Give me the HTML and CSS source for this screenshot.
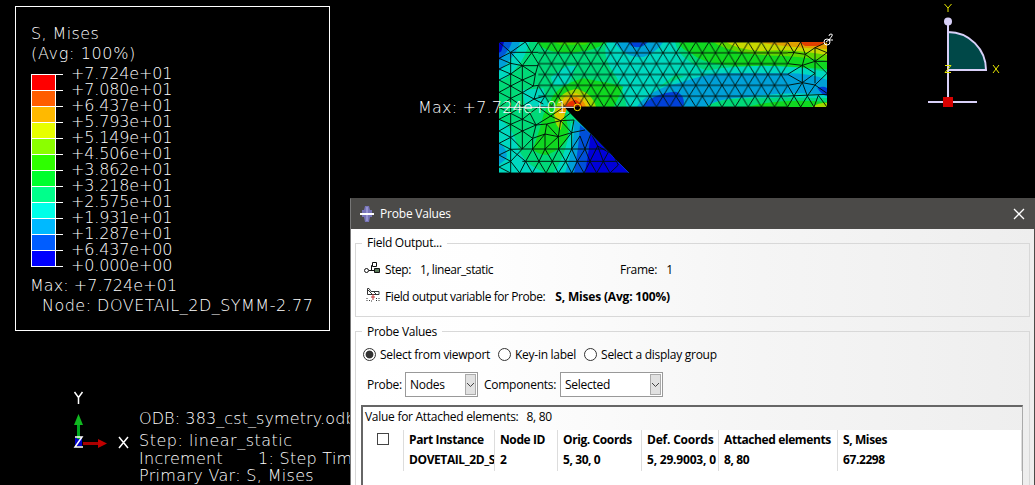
FILE: index.html
```html
<!DOCTYPE html>
<html lang="en">
<head>
<meta charset="utf-8">
<title>Probe Values</title>
<link rel="stylesheet" href="styles.css">
</head>
<body>
<main class="viewport">
  <section class="legend">
    <div class="legend-title">S, Mises</div>
    <div class="legend-title avg">(Avg: 100%)</div>
    <div class="scale">
      <div class="swatches">
        <i class="c1"></i><i class="c2"></i><i class="c3"></i><i class="c4"></i><i class="c5"></i><i class="c6"></i><i class="c7"></i><i class="c8"></i><i class="c9"></i><i class="c10"></i><i class="c11"></i><i class="c12"></i>
      </div>
      <div class="ticks"><i></i><i></i><i></i><i></i><i></i><i></i><i></i><i></i><i></i><i></i><i></i><i></i><i></i></div>
      <div class="values"><span>+7.724e+01</span><span>+7.080e+01</span><span>+6.437e+01</span><span>+5.793e+01</span><span>+5.149e+01</span><span>+4.506e+01</span><span>+3.862e+01</span><span>+3.218e+01</span><span>+2.575e+01</span><span>+1.931e+01</span><span>+1.287e+01</span><span>+6.437e+00</span><span>+0.000e+00</span></div>
    </div>
    <div class="legend-max">Max: +7.724e+01</div>
    <div class="legend-node">Node: DOVETAIL_2D_SYMM-2.77</div>
  </section>

  <svg class="mesh" viewBox="27 36 984 393" width="328" height="131">
    <defs>
      <clipPath id="part"><path d="M27 36H1011V231H222L417 429H27Z"/></clipPath>
      <pattern id="tri" patternUnits="userSpaceOnUse" x="27" y="36" width="39.36" height="65">
        <path d="M0 0L39.36 65M39.36 0L0 65M0 0H39.36M0 32.5H39.36M0 65H39.36" stroke="#001008" stroke-width="2.800" fill="none"/>
      </pattern>
    </defs>
    <g clip-path="url(#part)">
      <rect x="27" y="36" width="984" height="393" fill="#00d978"/>
      <!-- left edge, low stress -->
      <path d="M27 36H118Q108 80 80 112Q55 145 27 155Z" fill="#00d8c0"/>
      <path d="M27 36H90Q80 75 27 125Z" fill="#00a0d8"/>
      <path d="M27 36H66Q58 62 27 92Z" fill="#0058d8"/>
      <path d="M27 36H42L34 64L27 68Z" fill="#0000c8"/>
      <path d="M27 268Q65 285 82 345Q98 405 170 429H27Z" fill="#00d8c0"/>
      <path d="M27 338Q58 358 48 388L27 404Z" fill="#00a0d8"/>
      <path d="M98 180L160 175L175 230H105Z" fill="#00d8c0"/>
      <path d="M182 142L230 108H258L235 165H190Z" fill="#00d8c0"/>
      <!-- top green area -->
      <path d="M140 36H348Q320 63 240 68Q165 70 140 36Z" fill="#10d820"/>
      <path d="M190 36H300L285 44H210Z" fill="#40d800"/>
      <!-- middle band of the beam -->
      <path d="M352 36H850Q740 48 690 78Q610 110 555 134Q470 200 448 231H410Q400 165 365 120Q335 70 352 36Z" fill="#00d8c0"/>
      <path d="M372 36H520Q500 66 462 80Q410 88 372 36Z" fill="#00a0d8"/>
      <path d="M414 36H474Q460 52 440 52Q420 50 414 36Z" fill="#0040d8"/>
      <path d="M540 36H1011V165H700Q620 160 530 120Q535 70 565 36Z" fill="#00d8b8"/>
      <path d="M555 36H1011V130H720Q645 130 600 95Q560 70 555 36Z" fill="#00d978"/>
      <path d="M566 36H1011V118Q880 105 760 110Q640 105 604 70Q575 60 566 36Z" fill="#10d820"/>
      <path d="M670 36H1011V92Q930 78 855 77Q725 73 670 36Z" fill="#60d800"/>
      <path d="M708 36H1011V75Q900 55 810 63Q740 58 708 36Z" fill="#c8d800"/>
      <path d="M800 36H1011V57Q900 53 800 36Z" fill="#e0a000"/>
      <path d="M928 36H1011L990 48H945Z" fill="#e04000"/>
      <!-- blue tongue -->
      <path d="M450 231Q500 145 690 115Q850 95 1011 125V205H770Q680 205 650 231Z" fill="#00d8c0"/>
      <path d="M440 231Q480 177 565 160Q650 130 705 129H885Q970 130 1011 150V195Q900 182 770 202Q680 206 645 231Z" fill="#00a0d8"/>
      <path d="M455 231Q485 190 558 185Q588 195 580 231Z" fill="#0040d8"/>
      <path d="M982 174Q1000 166 1011 174V198Q995 195 982 174Z" fill="#0040d8"/>
      <path d="M680 231Q780 195 1011 205V231Z" fill="#00d978"/>
      <path d="M770 231Q870 203 1011 216V231Z" fill="#10d820"/>
      <path d="M965 231Q985 218 1011 218V231Z" fill="#a0d800"/>
      <!-- stress concentration -->
      <path d="M185 205Q205 165 280 145Q365 160 400 170Q380 215 370 231H222L235 300Q240 345 172 375Q145 375 128 358Q150 300 160 255Z" fill="#10d820"/>
      <path d="M202 220Q210 185 260 176Q308 190 318 231H230L212 300Q180 270 202 220Z" fill="#a0d800"/>
      <path d="M210 225Q220 192 258 189Q292 200 298 231H232L216 276L192 255Z" fill="#e0c800"/>
      <path d="M219 228Q226 204 258 200Q284 210 288 231H234L222 252L210 240Z" fill="#f09000"/>
      <path d="M226 231Q236 210 258 210Q275 221 277 231H232L224 241Z" fill="#e83000"/>
      <path d="M240 275L440 429H190Q235 365 245 260Z" fill="#00d8c0"/>
      <path d="M256 270L460 429H225Q252 355 253 270Z" fill="#00a0d8"/>
      <path d="M266 283L460 429H252Q266 355 270 285Z" fill="#0050d8"/>
      <path d="M295 290L460 450H280Q300 360 302 292Z" fill="#0000d8"/>
      <!-- elements -->
      <rect x="145" y="36" width="748" height="195" fill="url(#tri)"/>
      <g fill="none" stroke="#001008" stroke-width="2.800">
        <path d="M62 67V429M27 36L62 67L106 36L125 68L145 36M62 67H145M27 85L62 67L97 107L125 68L145 101M27 85L62 100L97 107H145M62 100L27 117L62 132L97 107L136 133L145 101M27 150L62 132L97 150L136 133L130 168L97 150L62 168L27 150M97 107V357M27 187L62 168L97 188L130 168L145 166M27 187L62 205L97 188L132 207L145 166M132 207L165 198M27 232L62 205L97 229L132 207L160 222M27 232H222M27 232L62 250L97 229L120 250L145 231L182 258L222 231M27 268L62 250L97 268L120 250L138 285L182 258L212 272L240 250M27 268L62 283L97 268L138 285L170 282L212 272L252 270M27 303L62 283L97 303L138 285L128 325L97 303L62 322L27 303M27 340L62 322L97 357L128 325L165 312L170 282L205 320L212 272L245 308L252 270M165 312L205 320L245 308L285 300M27 340L62 358L97 357H360M27 375L62 358L107 394L128 357L147 394L165 357L187 394L206 357L227 394L245 357L262 394L285 357L300 394L323 348L340 394L360 357L385 405M27 375L62 394L97 357M27 411L62 394L89 429L107 394L127 429L147 394L168 429L187 394L205 429L227 394L245 429L262 394L282 429L300 394L320 429L340 394L360 429L385 405M27 411L62 429M97 394H385M128 325V357L165 312V357L205 320L206 357L245 308V357L270 318L285 357L303 310L323 348L370 375M27 429H417"/>
        <path d="M893 36L912 68L932 36L946 73L975 53L1011 36M893 68H912L946 73L975 94L1011 68L975 53V160M912 68L893 101L937 106L946 73M937 106V158L975 130L937 106L975 94L1011 94M893 133L937 106M893 133L937 158L975 165L1011 130L975 94M893 166L937 158M893 166L912 198L937 158L952 198L975 165L1011 190M893 198L1011 193M893 231L912 198L932 231L952 198L972 231L985 196L1011 231"/>
      </g>
    </g>
    <path d="M27 232H254" stroke="#fff" stroke-width="3"/>
    <circle cx="262" cy="232" r="10" fill="none" stroke="#ffe800" stroke-width="3"/>
  </svg>
  <div class="max-label">Max: +7.724e+01</div>
  <svg class="node-marker" width="14" height="16" viewBox="0 0 14 16" fill="none" stroke="#fff"><circle cx="5" cy="10" r="3"/><path d="M4 10L8 7M7 4Q7 2 9 2Q11 2 10 4L7 8H11"/></svg>

  <svg class="view-triad" width="90" height="112" viewBox="920 0 90 112">
    <path d="M948 32A38 38 0 0 1 986 70H948Z" fill="#004848" stroke="#d8d0f8" stroke-width="2"/>
    <path d="M948 22V102M928 102H977" stroke="#d8d0f8" stroke-width="2"/>
    <circle cx="948" cy="21.500" r="4" fill="#d8d0f8"/><path d="M943 97h10v10h-10z" fill="#d80000"/>
    <g fill="none" stroke="#e8e800"><path d="M944.500 4L948 8L951.500 4M948 8V12M993 65L999 73M999 65L993 73M945 65.500H951L945 72.500H951"/></g>
  </svg>

  <svg class="triad" width="64" height="62" viewBox="68 388 64 62">
    <path d="M75 438h7v8h-7z" fill="#0000c8"/>
    <path d="M78.500 439V424" stroke="#00a820" stroke-width="3"/><path d="M78.500 414L74 425H83Z" fill="#10b820"/>
    <path d="M83 443.500H98" stroke="#a80000" stroke-width="3"/><path d="M107 443.500L98 439V448Z" fill="#c00000"/>
    <path d="M74.500 392L78.500 397.500L82.500 392M78.500 397V404M119 437L128 448M128 437L119 448M75 437H82L75 447H83" fill="none" stroke="#fff" stroke-width="1.500"/>
  </svg>

  <div class="status"><p class="odb">ODB: 383_cst_symetry.odb</p><p class="step-name">Step: linear_static</p><p class="increment"><span>Increment</span><span>1: Step Time</span></p><p class="primary">Primary Var: S, Mises</p></div>

  <section class="dialog">
    <header class="titlebar">
      <svg width="16" height="18" viewBox="0 0 16 18"><path d="M6 1H10L11 5H13V12H11L10 17H6L5 12H3V5H5Z" fill="#7774b8"/><path d="M7 2H9V16H7Z" fill="#9492d0"/><path d="M1 8H15V10H1Z" fill="#fff"/></svg>
      <span>Probe Values</span>
      <svg class="close" width="12" height="12" viewBox="0 0 12 12"><path d="M1 1L11 11M11 1L1 11" stroke="#fff" stroke-width="1.300"/></svg>
    </header>
    <div class="content">
      <fieldset class="output">
        <legend>Field Output...</legend>
        <div class="line">
          <svg class="step-icon" width="16" height="12" viewBox="0 0 16 12" fill="none" stroke="#111"><circle cx="2.500" cy="8.500" r="2"/><path d="M5 8.500H10M7.500 8V3.500H9M8.500.5H12.500V4.500H8.500Z"/><path d="M10.500 6.500H15.500V10.500H10.500Z" fill="#587858"/></svg>
          <span class="step">Step:<b>1, linear_static</b></span><span>Frame:<b>1</b></span>
        </div>
        <div class="line variable">
          <svg class="var-icon" width="14" height="14" viewBox="0 0 14 14" fill="none" stroke="#333"><path d="M1.500.5V6.500H13V3.500H5L3 .5ZM2 2L6 6M8 4L10 6"/><path d="M7 6V12M5 9H9" stroke="#c03030"/><path d="M1 10V13M3.500 12V14M10.500 10V13M13 10V13M5 13H7" stroke-dasharray="1 1"/></svg>
          <span>Field output variable for Probe:</span><strong>S, Mises (Avg: 100%)</strong>
        </div>
      </fieldset>
      <fieldset class="probe">
        <legend>Probe Values</legend>
        <div class="radios"><label class="on"><i></i><span>Select from viewport</span></label><label><i></i><span>Key-in label</span></label><label><i></i><span>Select a display group</span></label></div>
        <div class="selects">
          <span class="lab-probe">Probe:</span><div class="select nodes">Nodes<em><svg width="9" height="6" viewBox="0 0 9 6"><path d="M1 1L4.500 4.500L8 1" fill="none" stroke="#444"/></svg></em></div>
          <span class="lab-comp">Components:</span><div class="select selected">Selected<em><svg width="9" height="6" viewBox="0 0 9 6"><path d="M1 1L4.500 4.500L8 1" fill="none" stroke="#444"/></svg></em></div>
        </div>
        <div class="results">
          <div class="attached">Value for Attached elements:<span>8, 80</span></div>
          <div class="table">
            <div class="cell check"><i></i></div>
            <div class="cell"><span>Part Instance</span><span>DOVETAIL_2D_S</span></div>
            <div class="cell"><span>Node ID</span><span>2</span></div>
            <div class="cell"><span>Orig. Coords</span><span>5, 30, 0</span></div>
            <div class="cell def"><span>Def. Coords</span><span>5, 29.9003, 0</span></div>
            <div class="cell"><span>Attached elements</span><span>8, 80</span></div>
            <div class="cell"><span>S, Mises</span><span>67.2298</span></div>
          </div>
        </div>
      </fieldset>
    </div>
  </section>
</main>
</body>
</html>
```
FILE: styles.css
```css
* { box-sizing: border-box; }
body { margin: 0; background: #000; }
i, em { font-style: normal; }
p { margin: 0; }
.viewport { position: relative; width: 1035px; height: 485px; overflow: hidden; background: #000; color: #fff; font: 200 16px/20px "DejaVu Sans", "DejaVu Sans Light", sans-serif; white-space: nowrap; }
.legend { position: absolute; left: 15px; top: 6px; width: 315px; height: 325px; border: 1px solid #fff; padding: 17px 0 0 15px; }
.legend-title { height: 20px; letter-spacing: .4px; }
.avg { letter-spacing: .65px; }
.scale { display: flex; height: 193px; margin-top: 10px; }
.swatches { width: 25px; height: 193px; border: 1px solid #fff; border-bottom: 0; display: flex; flex-direction: column; }
.swatches i { height: 16px; border-bottom: 1px solid #fff; }
.c1 { background: #f00; } .c2 { background: #ff5d00; } .c3 { background: #ffb900; } .c4 { background: #e8ff00; }
.c5 { background: #8bff00; } .c6 { background: #2eff00; } .c7 { background: #00ff2e; } .c8 { background: #00ff8b; }
.c9 { background: #00ffe8; } .c10 { background: #00b9ff; } .c11 { background: #005dff; } .c12 { background: #00f; }
.ticks { width: 7px; display: flex; flex-direction: column; gap: 15px; }
.ticks i { height: 1px; background: #fff; }
.values { display: flex; flex-direction: column; margin: -8px 0 0 8px; letter-spacing: -.15px; }
.values span { height: 16px; line-height: 16px; }
.legend-max { margin-top: 9px; letter-spacing: .05px; margin-left: -1px; }
.legend-node { margin-left: 11px; letter-spacing: .48px; }
.mesh { position: absolute; left: 499px; top: 42px; }
.max-label { position: absolute; left: 418px; top: 98px; letter-spacing: .2px; }
.node-marker { position: absolute; left: 822px; top: 32px; }
.view-triad { position: absolute; left: 920px; top: 0; }
.triad { position: absolute; left: 68px; top: 388px; }
.status { position: absolute; left: 139px; top: 410px; line-height: 17.500px; letter-spacing: .27px; }
.odb { height: 22px; letter-spacing: .1px; }
.step-name { letter-spacing: .5px; }
.primary { letter-spacing: .32px; }
.increment { display: flex; gap: 35px; }
.dialog { position: absolute; left: 350px; top: 198px; width: 685px; height: 287px; border: 1px solid #4b4a48; border-left-color: #777; border-bottom: 0; color: #000; background: linear-gradient(90deg, #fff 0, #fefefe 20%, #f5f5f5 60%, #eee 100%); font: 400 12px/16px "Open Sans", "Noto Sans", sans-serif; letter-spacing: -.27px; }
.titlebar { display: flex; align-items: center; height: 30px; background: #4b4a48; color: #fff; padding: 0 9px 0 8px; gap: 5px; letter-spacing: -.2px; }
.close { margin-left: auto; }
.content { padding: 6px 4px 0; }
fieldset { margin: 0; min-width: 0; border: 1px solid #d8d8d8; padding: 0; }
legend { padding: 0 5px; margin-left: 6px; height: 16px; }
.output { height: 82px; }
.line { display: flex; align-items: center; height: 26px; padding-left: 8px; gap: 5px; margin-top: 6px; }
.line b { font-weight: 400; margin-left: 9px; }
.step-icon { transform: translateY(-2px); }
.step { width: 230px; letter-spacing: -.42px; }
.line.variable { margin-top: 1px; padding-left: 10px; letter-spacing: -.42px; }
.var-icon { transform: translateY(-2px); }
.variable strong { margin-left: 5px; letter-spacing: -.18px; }
.probe { height: 170px; margin-top: 6px; }
.probe legend { padding-top: 1px; }
.radios { display: flex; height: 28px; align-items: center; gap: 8px; padding: 2px 0 0 7px; }
.radios label { display: flex; gap: 4px; align-items: center; }
.radios label:nth-child(3) { letter-spacing: -.27px; }
.radios i { width: 13px; height: 13px; border: 1px solid #333; border-radius: 50%; background: #fff; }
.radios .on i { background: radial-gradient(circle, #333 0 3.500px, #fff 4.300px); }
.radios span { padding-top: 1px; }
.selects { display: flex; align-items: center; margin-top: 5px; height: 25px; padding-left: 11px; }
.lab-probe { width: 38px; }
.lab-comp { width: 76px; margin-left: 6px; }
.select { display: flex; align-items: center; justify-content: space-between; height: 25px; border: 1px solid #999; background: #fff; padding: 1px 1px 1px 4px; }
.select em { display: flex; align-items: center; justify-content: center; width: 11px; height: 21px; border: 1px solid #aaa; background: #e1e1e1; }
.select.nodes { width: 73px; } .select.selected { width: 103px; }
.results { margin: 8px 6px 0 5px; height: 100px; border: 1px solid #aaa; border-top: 2px solid #666; border-left: 2px solid #666; }
.attached { height: 23px; padding: 2px 0 0 2px; letter-spacing: -.28px; }
.attached span { margin-left: 8px; }
.table { display: grid; grid-template-columns: 41px 91px 63px 84px 77px 119px 1fr; height: 75px; background: #fff; font-weight: 700; letter-spacing: -.4px; }
.cell { height: 41px; overflow: hidden; border-right: 1px solid #ddd; padding: 0 0 0 5px; display: flex; flex-direction: column; }
.cell span { height: 20px; line-height: 20px; }
.def { letter-spacing: -.2px; }
.check { padding: 3px 0 0 14px; }
.check i { width: 12px; height: 12px; border: 1px solid #444; }
```
